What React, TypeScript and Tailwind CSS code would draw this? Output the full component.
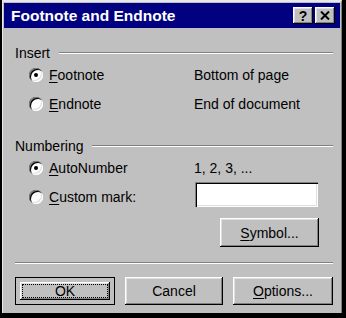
import React from 'react';

const raised =
  'shadow-[inset_-1px_-1px_0_#000,inset_1px_1px_0_#fff,inset_-2px_-2px_0_#808080,inset_2px_2px_0_#dfdfdf]';

const Radio: React.FC<{ checked?: boolean }> = ({ checked }) => (
  <div className="w-[14px] h-[14px] rounded-full bg-white shrink-0 flex items-center justify-center shadow-[inset_1px_1px_0_#808080,inset_2px_2px_0_#000,inset_-1px_-1px_0_#fff,inset_-2px_-2px_0_#dfdfdf]">
    {checked && <div className="w-[4px] h-[4px] rounded-full bg-black" />}
  </div>
);

const Etched: React.FC<{ className?: string }> = ({ className = '' }) => (
  <div className={`h-[2px] border-t border-[#808080] border-b border-b-white ${className}`} />
);

const OptionRow: React.FC<{
  checked?: boolean;
  hot: string;
  rest: string;
  note?: string;
  className?: string;
}> = ({ checked, hot, rest, note, className = '' }) => (
  <div className={`flex items-center h-[20px] ${className}`}>
    <div className="w-[179px] flex items-center gap-[6px] pl-[14px]">
      <Radio checked={checked} />
      <span>
        <u className="underline-offset-2">{hot}</u>
        {rest}
      </span>
    </div>
    {note && <span>{note}</span>}
  </div>
);

const Button: React.FC<{ children: React.ReactNode; isDefault?: boolean; className?: string }> = ({
  children,
  isDefault,
  className = '',
}) => (
  <div
    className={`h-[28px] bg-[#c0c0c0] flex items-center justify-center ${
      isDefault ? 'border border-black p-[4px]' : raised
    } ${className}`}
  >
    {isDefault ? (
      <div className={`w-full h-full flex items-center justify-center ${raised} p-[2px]`}>
        <div className="w-full h-full border border-dotted border-black flex items-center justify-center">
          {children}
        </div>
      </div>
    ) : (
      children
    )}
  </div>
);

export default function App() {
  return (
    <div className="w-[346px] h-[318px] bg-black font-['Liberation_Sans',Arial,sans-serif] text-[14px] leading-[16px] text-black">
      <div className="ml-[2px] w-[340px] h-[313px] bg-[#c0c0c0] border-t-2 border-l border-[#e8e8e8] border-r border-r-[#808080] pl-[1px] pr-[1px] pt-[1px] flex flex-col">
        {/* title bar */}
        <div className="h-[25px] bg-[#000080] flex items-center pl-[7px] pr-[5px]">
          <span className="flex-1 text-white font-bold text-[15.5px] leading-[18px]">Footnote and Endnote</span>
          <div className={`w-[20px] h-[17px] bg-[#c0c0c0] ${raised} flex items-center justify-center font-bold text-[14px] leading-none`}>
            ?
          </div>
          <div className={`ml-[2px] w-[20px] h-[17px] bg-[#c0c0c0] ${raised} flex items-center justify-center`}>
            <svg width="10" height="9" viewBox="0 0 10 9">
              <path d="M1 0.5 L9 8.5 M9 0.5 L1 8.5" stroke="#000" strokeWidth="2" />
            </svg>
          </div>
        </div>

        {/* body */}
        <div className="pl-[11px] w-[329px] flex flex-col">
          <div className="mt-[17px] flex items-center h-[16px] gap-[9px]">
            <span>Insert</span>
            <Etched className="flex-1" />
          </div>
          <OptionRow className="mt-[4px]" checked hot="F" rest="ootnote" note="Bottom of page" />
          <OptionRow className="mt-[9px]" hot="E" rest="ndnote" note="End of document" />

          <div className="mt-[24px] flex items-center h-[16px] gap-[9px]">
            <span>Numbering</span>
            <Etched className="flex-1" />
          </div>
          <OptionRow className="mt-[4px]" checked hot="A" rest="utoNumber" note="1, 2, 3, ..." />

          <div className="mt-[4px] flex items-start h-[25px]">
            <div className="w-[180px] mt-[5px] flex items-center h-[20px] gap-[6px] pl-[14px]">
              <Radio />
              <span>
                <u className="underline-offset-2">C</u>ustom mark:
              </span>
            </div>
            <div className="w-[123px] h-[25px] bg-white shadow-[inset_1px_1px_0_#808080,inset_2px_2px_0_#000,inset_-1px_-1px_0_#fff,inset_-2px_-2px_0_#dfdfdf]" />
          </div>

          <div className="mt-[11px] flex">
            <Button className="ml-[205px] w-[99px] h-[29px]">
              <span>
                <u className="underline-offset-2">S</u>ymbol...
              </span>
            </Button>
          </div>

          <Etched className="mt-[15px]" />

          <div className="mt-[13px] flex gap-[10px]">
            <Button isDefault className="w-[100px]">
              OK
            </Button>
            <Button className="w-[98px]">Cancel</Button>
            <Button className="w-[100px]">
              <span>
                <u className="underline-offset-2">O</u>ptions...
              </span>
            </Button>
          </div>
        </div>
      </div>
    </div>
  );
}
